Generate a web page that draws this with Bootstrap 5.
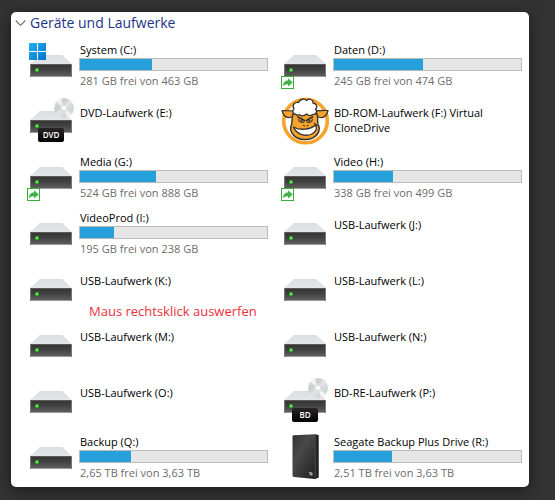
<!DOCTYPE html>
<html lang="de">
<head>
<meta charset="utf-8">
<meta name="viewport" content="width=device-width, initial-scale=1">
<title>Geräte und Laufwerke</title>
<link rel="stylesheet" href="https://cdn.jsdelivr.net/npm/bootstrap@5.3.0/dist/css/bootstrap.min.css">
<style>
body { background: #333; font-family: "Open Sans", "Noto Sans", sans-serif; font-size: 11px; line-height: 15px; color: #000; }
.explorer { margin: 12px 26px 13px 11px; border-radius: 5px; box-shadow: 0 3px 16px rgba(0,0,0,.5); padding: 0 7px 2px 16px; }
.group-toggle { height: 25px; margin-left: -12px; gap: 4px; font-size: 14px; line-height: 20px; color: #1e3287; }
.drives { grid-template-columns: 1fr 1fr; column-gap: 13px; }
.drive { height: 56px; gap: 4px; }
.drive-icon { width: 48px; height: 48px; }
.drive-text { min-height: 32px; min-width: 0; }
.drive-text span { padding-left: 1px; }
.usage { height: 13px; margin: 1px 0 2px; border: 1px solid #bcbcbc; border-radius: 0; background: #e6e6e6; }
.usage .progress-bar { background: #26a0da; }
.free { color: #6d6d6d; }
.note { left: 62px; top: 41px; font-size: 13px; line-height: 18px; color: #ed2f3b; white-space: nowrap; }
</style>
</head>
<body>
<svg width="0" height="0" class="position-absolute" aria-hidden="true">
  <defs>
    <linearGradient id="gTop" x1="0" y1="0" x2="0" y2="1"><stop offset="0" stop-color="#dcdde0"/><stop offset="1" stop-color="#e4e5e9"/></linearGradient>
    <linearGradient id="gFront" x1="0" y1="0" x2="0" y2="1"><stop offset="0" stop-color="#333"/><stop offset=".5" stop-color="#444"/><stop offset="1" stop-color="#636363"/></linearGradient>
    <linearGradient id="gWin" gradientUnits="userSpaceOnUse" x1="2" y1="2" x2="19" y2="19"><stop offset="0" stop-color="#2bb0ec"/><stop offset="1" stop-color="#0072cf"/></linearGradient>
    <linearGradient id="gDisc" x1="0" y1="0" x2="1" y2="1"><stop offset="0" stop-color="#d9dcdc"/><stop offset=".35" stop-color="#c9cfcf"/><stop offset=".5" stop-color="#e6e4ea"/><stop offset=".7" stop-color="#cfd8d5"/><stop offset="1" stop-color="#d2d2d2"/></linearGradient>
    <linearGradient id="gTag" x1="0" y1="0" x2="0" y2="1"><stop offset="0" stop-color="#262626"/><stop offset="1" stop-color="#000"/></linearGradient>
    <linearGradient id="gCase" x1="0" y1="0" x2="1" y2="1"><stop offset="0" stop-color="#333"/><stop offset=".35" stop-color="#484848"/><stop offset="1" stop-color="#1c1c1c"/></linearGradient>
    <g id="hdd">
      <path d="M13 14h22.500L45 23H3z" fill="url(#gTop)"/>
      <rect x="3" y="23" width="42" height="13" fill="url(#gFront)"/>
      <path d="M3 23.500h42" stroke="#5b5b5b"/>
      <path d="M3 35.500h42" stroke="#9a9a9a"/>
      <path d="M3.500 23v13M44.500 23v13" stroke="#777"/>
      <circle cx="10" cy="29" r="2" fill="#2ac02a"/><circle cx="10" cy="29" r=".9" fill="#7dff6a"/>
    </g>
    <g id="winlogo" fill="url(#gWin)">
      <path d="M2 2h8v8H2zM11 2h8v8h-8zM2 11h8v8H2zM11 11h8v8h-8z"/>
    </g>
    <g id="share">
      <rect x=".5" y="35.500" width="12" height="12" fill="#fff" stroke="#35b135"/>
      <path d="M2 45.500C2 41.500 4 39.600 7 39.600V37.200L11.800 41.400 7 45.600V43.200C4.800 43 3.200 43.900 2 45.500z" fill="#3fb449"/>
    </g>
    <g id="disc">
      <circle cx="37" cy="11" r="10" fill="url(#gDisc)"/>
      <path d="M37 11L29 5A10 10 0 0 1 34 1.500zM37 11l8 6a10 10 0 0 1-5 3.500z" fill="#f0f2f2"/>
      <circle cx="37" cy="11" r="3.600" fill="#e6e8e8" stroke="#d0d3d3" stroke-width=".6"/>
      <circle cx="37" cy="11" r="1.800" fill="#fff"/>
    </g>
    <g id="tag"><rect x="11" y="31" width="26" height="14" rx="2" fill="url(#gTag)"/></g>
    <g id="sheep" stroke-linejoin="round" stroke-linecap="round">
      <circle cx="24.500" cy="24" r="21.800" fill="#fff" stroke="#f7a32d" stroke-width="3.600"/>
      <path d="M13.500 14C9 13.500 5 13.500 1 13.500 2 18 5 21 9 20.500 11.500 20 13 18.500 14 17z" fill="#f7a32d" stroke="#33302d" stroke-width="1.200"/>
      <path d="M34.500 14C39 13.500 43 13 47 13.500 46 18 43 21 39 20.500 36.500 20 35 18.500 34 17z" fill="#f7a32d" stroke="#33302d" stroke-width="1.200"/>
      <path d="M12 17C10.500 21 11.500 24 10.500 27.500 9 31 9.500 34.500 12 37.500 15 41.500 19 42.500 24 42.500S33.500 41 36.500 37C39 33.500 38.500 30 37 27 36 24 37.500 21 36 17L24 13z" fill="#f7a32d" stroke="#33302d" stroke-width="1.400"/>
      <path d="M15 17.500C11.500 17 11 13.500 13 12 10.500 8 14 4.500 17.500 5.500 19 1.500 24 1.500 25.500 3.500 28 1 32.500 2.500 32 6 36 6.500 37 10 34.500 12 37 14.500 34.500 18 31.500 17.500 29 19.500 27 18.500 25.500 17 22.500 19.500 19.500 19.500 18.500 17.500 17 18.500 16 18.500 15 17.500z" fill="#fff" stroke="#33302d" stroke-width="1.300"/>
      <path d="M17 20L23.500 23.500M31.500 20L25.500 23.500" stroke="#33302d" stroke-width="1.700"/>
      <path d="M17.500 22.500C18 25 20.500 26 23 25M31.500 22.500C31 25 28.500 26 26 25" fill="none" stroke="#33302d" stroke-width="1.200"/>
      <circle cx="20.500" cy="23.700" r=".9" fill="#33302d"/><circle cx="28.500" cy="23.700" r=".9" fill="#33302d"/>
      <path d="M22.500 28.300l1 .6M27 28.300l-1 .6" stroke="#33302d" stroke-width="1.100"/>
      <path d="M12.500 30C18 33.500 29 33 34.500 28 36.500 31.500 35 35.500 30 37.500 24 39.500 15.500 37.500 12.500 30z" fill="#fff" stroke="#33302d" stroke-width="1.300"/>
      <path d="M33.500 26.500l2.500 2" stroke="#33302d" stroke-width="1.300"/>
    </g>
    <g id="portable">
      <path d="M11.500 3.500Q11.500 2.400 12.500 2.300L34 1.200 37.500 2V44.500L34 46 13 44Q11.500 43.700 11.500 42.500z" fill="url(#gCase)"/>
      <path d="M34.200 1.500L37.500 2.300V44.500L34.200 45.800z" fill="#222"/>
      <path d="M34.200 2v43.500" stroke="#5a5a5a" stroke-width=".7"/>
      <circle cx="30" cy="41" r="1.900" fill="#777"/><path d="M28 39.500q2.500-.5 3 2.500" fill="none" stroke="#ccc" stroke-width=".8"/>
    </g>
  </defs>
</svg>

<main class="explorer bg-white">
  <h1 class="m-0 d-flex"><button type="button" class="group-toggle btn border-0 rounded-0 p-0 pb-1 d-flex align-items-center" data-bs-toggle="collapse" data-bs-target="#drives" aria-expanded="true" aria-controls="drives">
    <svg width="11" height="8" viewBox="0 0 11 8" fill="none" stroke="#777" stroke-width="1.200" aria-hidden="true"><path d="M.7 1.500L5.500 6.500 10.300 1.500"/></svg>
    Geräte und Laufwerke
  </button></h1>
  <div class="collapse show" id="drives">
  <ul class="drives d-grid list-unstyled m-0">
    <li class="drive d-flex align-items-center">
      <svg class="drive-icon flex-shrink-0" viewBox="0 0 48 48" aria-hidden="true"><use href="#hdd"/><use href="#winlogo"/></svg>
      <div class="drive-text flex-grow-1 d-flex flex-column"><span>System (C:)</span>
        <div class="usage progress" role="progressbar" aria-label="Belegt" aria-valuenow="39" aria-valuemin="0" aria-valuemax="100"><div class="progress-bar" style="width:38.5%"></div></div>
        <span class="free">281 GB frei von 463 GB</span></div>
    </li>
    <li class="drive d-flex align-items-center">
      <svg class="drive-icon flex-shrink-0" viewBox="0 0 48 48" aria-hidden="true"><use href="#hdd"/><use href="#share"/></svg>
      <div class="drive-text flex-grow-1 d-flex flex-column"><span>Daten (D:)</span>
        <div class="usage progress" role="progressbar" aria-label="Belegt" aria-valuenow="48" aria-valuemin="0" aria-valuemax="100"><div class="progress-bar" style="width:47.6%"></div></div>
        <span class="free">245 GB frei von 474 GB</span></div>
    </li>
    <li class="drive d-flex align-items-center">
      <svg class="drive-icon flex-shrink-0" viewBox="0 0 48 48" aria-hidden="true"><use href="#hdd"/><use href="#disc"/><use href="#tag"/><text x="24" y="41" text-anchor="middle" font-size="8" font-weight="600" fill="#fff">DVD</text></svg>
      <div class="drive-text flex-grow-1 d-flex flex-column"><span>DVD-Laufwerk (E:)</span></div>
    </li>
    <li class="drive d-flex align-items-center">
      <svg class="drive-icon flex-shrink-0" viewBox="0 0 48 48" aria-hidden="true"><use href="#sheep"/></svg>
      <div class="drive-text flex-grow-1 d-flex flex-column"><span>BD-ROM-Laufwerk (F:) Virtual CloneDrive</span></div>
    </li>
    <li class="drive d-flex align-items-center">
      <svg class="drive-icon flex-shrink-0" viewBox="0 0 48 48" aria-hidden="true"><use href="#hdd"/><use href="#share"/></svg>
      <div class="drive-text flex-grow-1 d-flex flex-column"><span>Media (G:)</span>
        <div class="usage progress" role="progressbar" aria-label="Belegt" aria-valuenow="41" aria-valuemin="0" aria-valuemax="100"><div class="progress-bar" style="width:40.6%"></div></div>
        <span class="free">524 GB frei von 888 GB</span></div>
    </li>
    <li class="drive d-flex align-items-center">
      <svg class="drive-icon flex-shrink-0" viewBox="0 0 48 48" aria-hidden="true"><use href="#hdd"/><use href="#share"/></svg>
      <div class="drive-text flex-grow-1 d-flex flex-column"><span>Video (H:)</span>
        <div class="usage progress" role="progressbar" aria-label="Belegt" aria-valuenow="32" aria-valuemin="0" aria-valuemax="100"><div class="progress-bar" style="width:31.6%"></div></div>
        <span class="free">338 GB frei von 499 GB</span></div>
    </li>
    <li class="drive d-flex align-items-center">
      <svg class="drive-icon flex-shrink-0" viewBox="0 0 48 48" aria-hidden="true"><use href="#hdd"/></svg>
      <div class="drive-text flex-grow-1 d-flex flex-column"><span>VideoProd (I:)</span>
        <div class="usage progress" role="progressbar" aria-label="Belegt" aria-valuenow="18" aria-valuemin="0" aria-valuemax="100"><div class="progress-bar" style="width:18.4%"></div></div>
        <span class="free">195 GB frei von 238 GB</span></div>
    </li>
    <li class="drive d-flex align-items-center">
      <svg class="drive-icon flex-shrink-0" viewBox="0 0 48 48" aria-hidden="true"><use href="#hdd"/></svg>
      <div class="drive-text flex-grow-1 d-flex flex-column"><span>USB-Laufwerk (J:)</span></div>
    </li>
    <li class="drive d-flex align-items-center position-relative">
      <svg class="drive-icon flex-shrink-0" viewBox="0 0 48 48" aria-hidden="true"><use href="#hdd"/></svg>
      <div class="drive-text flex-grow-1 d-flex flex-column"><span>USB-Laufwerk (K:)</span></div>
      <strong class="note position-absolute fw-normal">Maus rechtsklick auswerfen</strong>
    </li>
    <li class="drive d-flex align-items-center">
      <svg class="drive-icon flex-shrink-0" viewBox="0 0 48 48" aria-hidden="true"><use href="#hdd"/></svg>
      <div class="drive-text flex-grow-1 d-flex flex-column"><span>USB-Laufwerk (L:)</span></div>
    </li>
    <li class="drive d-flex align-items-center">
      <svg class="drive-icon flex-shrink-0" viewBox="0 0 48 48" aria-hidden="true"><use href="#hdd"/></svg>
      <div class="drive-text flex-grow-1 d-flex flex-column"><span>USB-Laufwerk (M:)</span></div>
    </li>
    <li class="drive d-flex align-items-center">
      <svg class="drive-icon flex-shrink-0" viewBox="0 0 48 48" aria-hidden="true"><use href="#hdd"/></svg>
      <div class="drive-text flex-grow-1 d-flex flex-column"><span>USB-Laufwerk (N:)</span></div>
    </li>
    <li class="drive d-flex align-items-center">
      <svg class="drive-icon flex-shrink-0" viewBox="0 0 48 48" aria-hidden="true"><use href="#hdd"/></svg>
      <div class="drive-text flex-grow-1 d-flex flex-column"><span>USB-Laufwerk (O:)</span></div>
    </li>
    <li class="drive d-flex align-items-center">
      <svg class="drive-icon flex-shrink-0" viewBox="0 0 48 48" aria-hidden="true"><use href="#hdd"/><use href="#disc"/><use href="#tag"/><text x="24" y="41" text-anchor="middle" font-size="8" font-weight="600" fill="#fff">BD</text></svg>
      <div class="drive-text flex-grow-1 d-flex flex-column"><span>BD-RE-Laufwerk (P:)</span></div>
    </li>
    <li class="drive d-flex align-items-center">
      <svg class="drive-icon flex-shrink-0" viewBox="0 0 48 48" aria-hidden="true"><use href="#hdd"/></svg>
      <div class="drive-text flex-grow-1 d-flex flex-column"><span>Backup (Q:)</span>
        <div class="usage progress" role="progressbar" aria-label="Belegt" aria-valuenow="27" aria-valuemin="0" aria-valuemax="100"><div class="progress-bar" style="width:27.3%"></div></div>
        <span class="free">2,65 TB frei von 3,63 TB</span></div>
    </li>
    <li class="drive d-flex align-items-center">
      <svg class="drive-icon flex-shrink-0" viewBox="0 0 48 48" aria-hidden="true"><use href="#portable"/></svg>
      <div class="drive-text flex-grow-1 d-flex flex-column"><span>Seagate Backup Plus Drive (R:)</span>
        <div class="usage progress" role="progressbar" aria-label="Belegt" aria-valuenow="31" aria-valuemin="0" aria-valuemax="100"><div class="progress-bar" style="width:31%"></div></div>
        <span class="free">2,51 TB frei von 3,63 TB</span></div>
    </li>
  </ul>
  </div>
</main>
<script src="https://cdn.jsdelivr.net/npm/bootstrap@5.3.0/dist/js/bootstrap.bundle.min.js"></script>
</body>
</html>
